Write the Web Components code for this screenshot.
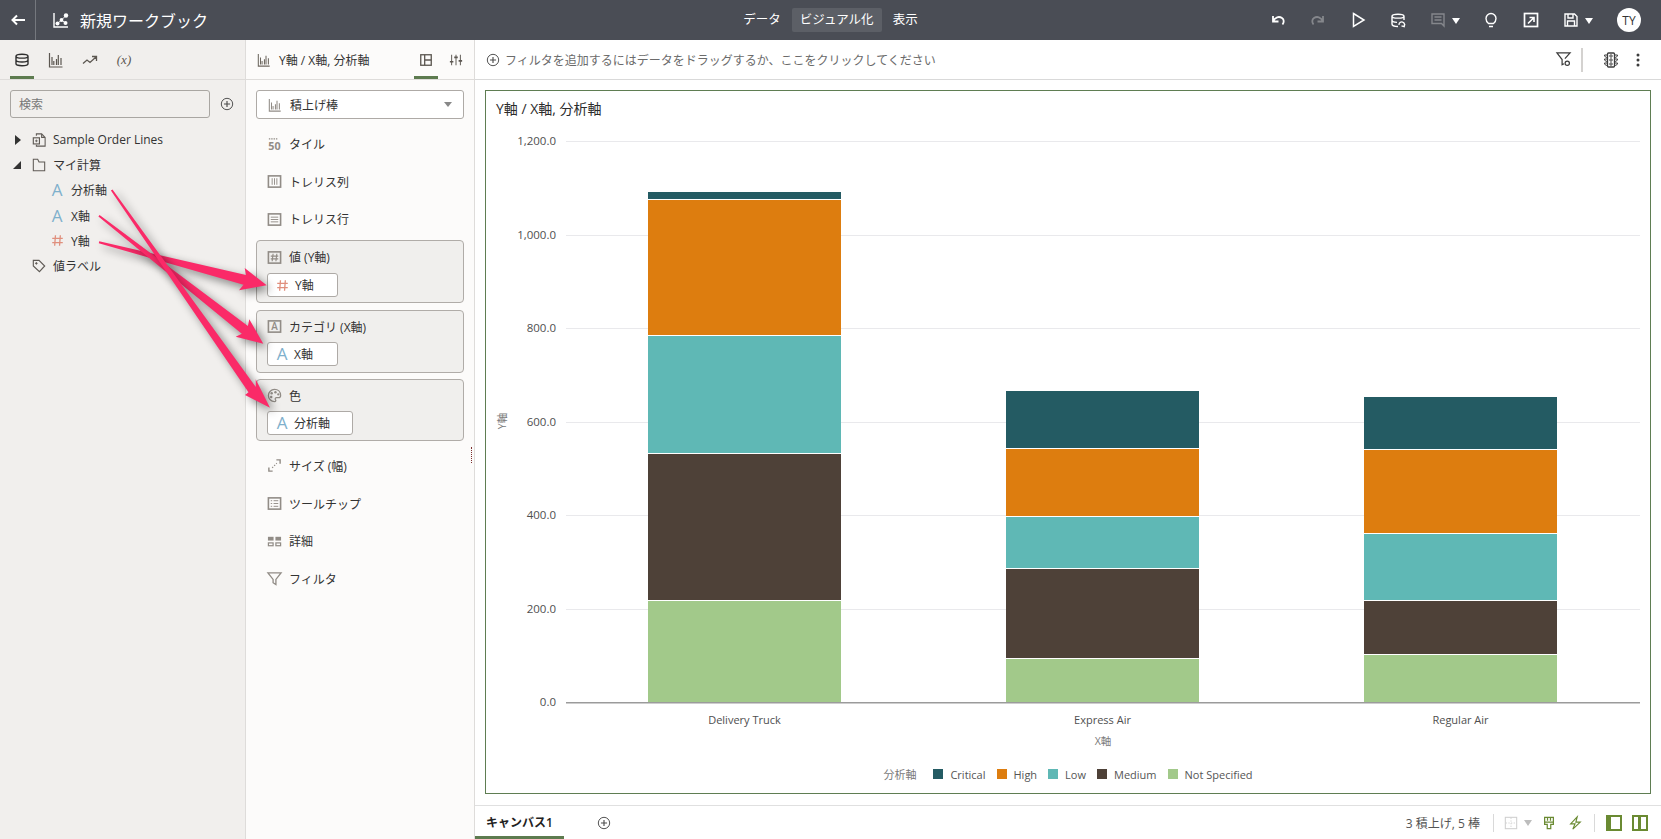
<!DOCTYPE html>
<html lang="ja">
<head>
<meta charset="utf-8">
<title>新規ワークブック</title>
<style>
    html, body { margin: 0; height: 100%; overflow: hidden; }
    body { font-family: "Open Sans", "Noto Sans CJK JP", sans-serif; font-size: 12px; color: #333; position: relative; }
</style>
</head>
<body>
<wb-app></wb-app>
<annotation-arrows></annotation-arrows>

<script>
const ICONS = {
    back: '<path d="M15 8H2.5M7 3.5 2.5 8 7 12.5" stroke-width="2"/>',
    workbook: '<path d="M1 1v14h14" stroke-width="1.4"/><path d="M4.5 11.5 8.5 8l4-4M8.5 8l4 3" stroke-width=".9"/><g fill="currentColor" stroke="none"><circle cx="4.5" cy="11.5" r="2"/><circle cx="8.5" cy="8" r="1.9"/><circle cx="13" cy="3.5" r="2.2"/><circle cx="12.5" cy="11" r="2"/></g>',
    db: '<path d="M2 4.2C2 1.6 14 1.6 14 4.2v7.6c0 2.6-12 2.6-12 0zM2 4.2c0 2.6 12 2.6 12 0M2 8c0 2.6 12 2.6 12 0" stroke-width="1.4"/>',
    bars: '<path d="M1.5 1v14h13M4 13V5M5.8 13V9M8.5 13V7M10.3 13V3M13 13V6" stroke-width="1.2"/>',
    trend: '<path d="M1 11.5 5 8l3 2.5 6-5.5M10 4.5h4.5V9" stroke-width="1.3"/>',
    plus: '<circle cx="8" cy="8" r="6.5" stroke-width="1.1"/><path d="M8 4.5v7M4.5 8h7" stroke-width="1.3"/>',
    dataset: '<path d="M5 3V1h6l4 4v10H5v-1.5M11 1v4h4" stroke-width="1.2"/><rect x="1.5" y="5.5" width="7" height="7" stroke-width="1.3"/><path d="M5 7.5v3M3.5 9h3"/>',
    folder: '<path d="M1.5 1.5h5l1.5 3h6.5v10h-13z" stroke-width="1.2"/>',
    tag: '<path d="M1.5 1.5h6.5l6.5 6.5-6 6.5-7-6.5z" stroke-width="1.3"/><circle cx="5" cy="5" r=".9" fill="currentColor"/>',
    hash: '<path d="M5.5 1.5 4.5 14.5M11.5 1.5l-1 13M1.5 5.5h13M1.5 10.5h13" stroke-width="1.6"/>',
    title50: '<path d="M2 3h9" stroke-dasharray="1.5 1" stroke-width="1.3"/><text x="8" y="14.5" text-anchor="middle" font-size="11.5" font-weight="700" fill="currentColor" stroke="none">50</text>',
    trelcol: '<rect x="1.5" y="2" width="13" height="12" stroke-width="1.7"/><path d="M5.5 4.5v7M8 4.5v7M10.5 4.5v7"/>',
    trelrow: '<rect x="1.5" y="2" width="13" height="12" stroke-width="1.7"/><path d="M4 5.5h8M4 8h8M4 10.5h8"/>',
    boxhash: '<rect x="1.5" y="2" width="13" height="12" stroke-width="1.7"/><path d="M6.5 4 5.5 12M10.5 4l-1 8M4 6.5h8M4 9.5h8" stroke-width="1.2"/>',
    boxa: '<rect x="1.5" y="2" width="13" height="12" stroke-width="1.7"/><text x="8" y="12" text-anchor="middle" font-size="10.5" font-weight="600" fill="currentColor" stroke="none">A</text>',
    palette: '<path d="M8 1.5a6.5 6.5 0 1 0 0 13c1.6 0 1.6-1.4 1-2.2-.7-1 .1-2 1.2-2h2.3c1.3 0 2-1 2-2.3C14.5 4 11.7 1.5 8 1.5z" stroke-width="1.4"/><g fill="currentColor" stroke="none"><circle cx="5" cy="5.5" r="1.3"/><circle cx="9" cy="4.5" r="1.3"/><circle cx="12" cy="6.8" r="1.2"/><circle cx="4.5" cy="9.5" r="1.3"/></g>',
    size: '<path d="M10 2h4v4M2 10v4h4" stroke-width="1.5"/><path d="M5.5 10.5l5-5" stroke-dasharray="1.5 1.5" stroke-width="1.2"/>',
    tooltip: '<rect x="1.5" y="2" width="13" height="12" stroke-width="1.7"/><path d="M4 5h1.5M7 5h5M4 8h1.5M7 8h5M4 11h1.5M7 11h5"/>',
    detail: '<g fill="currentColor" stroke="none"><rect x="1" y="3" width="6" height="4"/><rect x="9" y="3" width="6" height="4"/></g><rect x="1.5" y="9.5" width="5" height="3" stroke-width="1.3"/><rect x="9.5" y="9.5" width="5" height="3" stroke-width="1.3"/>',
    funnel: '<path d="M1 2h14L9.5 9v5.5l-3-2V9z" stroke-width="1.4"/>',
    layout: '<rect x="2" y="2" width="12" height="12" stroke-width="1.5"/><path d="M6.5 2v12M6.5 8H14" stroke-width="1.5"/>',
    sliders: '<path d="M3 2v12M8 2v12M13 2v12" stroke-width="1.1"/><path d="M1 10h4M6 5h4M11 9h4" stroke-width="1.8"/>',
    undo: '<path d="M3 4v5.5h5.5M3 9.5C5 5 9 4 12 6c2.2 1.5 2.2 4.5.5 6.5" stroke-width="1.8"/>',
    redo: '<path d="M13 4v5.5H7.5M13 9.5C11 5 7 4 4 6c-2.2 1.5-2.2 4.5-.5 6.5" stroke-width="1.8"/>',
    play: '<path d="M3.5 1.5 14 8 3.5 14.5z" stroke-width="1.5"/>',
    dbrefresh: '<path d="M8 14.5c-3 0-6-.8-6-2.5V4.2C2 1.6 14 1.6 14 4.2V8M2 4.2c0 2.6 12 2.6 12 0M2 8c0 1.5 2.5 2.3 5 2.4" stroke-width="1.4"/><path d="M9 13a2.8 2.8 0 1 1 5 1.5M14.8 11.8l-.6 2.9-2.7-.8" stroke-width="1.3"/>',
    comment: '<path d="M2 2h12v12l-2.5-2.5H2zM4.5 5h7M4.5 8h7" stroke-width="1.4"/>',
    bulb: '<path d="M5.5 11.5C4 10.3 3 8.8 3 6.5a5 5 0 0 1 10 0c0 2.3-1 3.8-2.5 5zM6 14.5h4" stroke-width="1.4"/>',
    exportbox: '<rect x="1.5" y="1.5" width="13" height="13" stroke-width="1.7"/><path d="M5 11.5l5.5-5.5M6.5 5.5h4.5V10" stroke-width="1.6"/>',
    save: '<path d="M2 2h9.5L14 4.5V14H2zM5 2v4h5V2M4.5 14V9h7v5" stroke-width="1.4"/>',
    filtergear: '<path d="M9.5 7 15 1H1l5.5 7v5.5l2-1" stroke-width="1.3"/><circle cx="12" cy="12" r="2.3" stroke-width="1.3"/>',
    traffic: '<rect x="4.5" y="1" width="7" height="14" rx="1" stroke-width="1.3"/><circle cx="8" cy="4" r="1.2"/><circle cx="8" cy="8" r="1.2"/><circle cx="8" cy="12" r="1.2"/><path d="M4.5 3H1.5c0 1.5 1 2.5 3 2.5M4.5 7H1.5c0 1.5 1 2.5 3 2.5M4.5 11H1.5c0 1.5 1 2.5 3 2.5M11.5 3h3c0 1.5-1 2.5-3 2.5M11.5 7h3c0 1.5-1 2.5-3 2.5M11.5 11h3c0 1.5-1 2.5-3 2.5"/>',
    kebab: '<g fill="currentColor" stroke="none"><circle cx="8" cy="3" r="1.5"/><circle cx="8" cy="8" r="1.5"/><circle cx="8" cy="13" r="1.5"/></g>',
    griddis: '<rect x="1.5" y="1.5" width="13" height="13" stroke-width="1.2"/><path d="M8 2v12M2 8h12" stroke-dasharray="1.5 1.5"/>',
    paint: '<path d="M3 1.5h10v8h-3V14.5H6V9.5H3zM6.3 1.5v4M9.7 1.5v4M3 7h10" stroke-width="1.4"/>',
    bolt: '<path d="M10.5 1 3 9h5l-2.5 6L14 7H9z" stroke-width="1.3"/>',
    panelleft: '<rect width="16" height="16" fill="currentColor" stroke="none"/><rect x="5" y="2" width="9" height="12" fill="#fff" stroke="none"/>',
    panelmid: '<rect width="16" height="16" fill="currentColor" stroke="none"/><rect x="2" y="2" width="12" height="12" fill="#fff" stroke="none"/><rect x="6" y="2" width="3" height="12" fill="currentColor" stroke="none"/>'
};

class WbIcon extends HTMLElement {
    connectedCallback() {
        const name = this.getAttribute('name');
        const size = this.getAttribute('size') || 16;
        if (!this.shadowRoot) this.attachShadow({mode: 'open'});
        this.shadowRoot.innerHTML = `
            <style>
                :host { display: inline-flex; flex: none; line-height: 0; }
                svg { display: block; overflow: visible; }
            </style>
            <svg width="${size}" height="${size}" viewBox="0 0 16 16" fill="none" stroke="currentColor" stroke-width="1">${ICONS[name] || ''}</svg>
        `;
    }
}
customElements.define('wb-icon', WbIcon);

class WbHeader extends HTMLElement {
    constructor() {
        super();
        this.attachShadow({mode: 'open'}).innerHTML = `
            <style>
                :host {
                    display: grid;
                    grid-template-columns: 1fr auto 1fr;
                    align-items: center;
                    height: 40px;
                    background: #4a4d55;
                    color: #fff;
                }
                .left, .right { display: flex; align-items: center; height: 40px; }
                .right { justify-content: flex-end; padding-right: 20px; }
                .back { display: flex; align-items: center; justify-content: center; width: 35px; height: 40px; border-right: 1px solid #75787e; }
                .logo { margin-left: 17px; margin-right: 11px; }
                .title { font-size: 16px; }
                nav { display: flex; align-items: center; gap: 3px; font-size: 12.5px; }
                nav span { padding: 0 8px; height: 24px; line-height: 24px; border-radius: 2px; }
                nav .on { background: #5c5f66; }
                .btn { display: flex; align-items: center; justify-content: center; width: 40px; height: 40px; }
                .group { display: flex; align-items: center; width: 53px; height: 40px; padding-left: 12px; box-sizing: border-box; gap: 6px; }
                .caret { width: 0; height: 0; border-left: 4.5px solid transparent; border-right: 4.5px solid transparent; border-top: 6px solid #fff; margin-top: 1px; }
                .off { color: #85878c; }
                .avatar {
                    width: 24px; height: 24px; border-radius: 50%;
                    background: #fff; color: #333; font-size: 12px;
                    display: flex; align-items: center; justify-content: center;
                    margin-left: 13px;
                }
            </style>
            <div class="left">
                <div class="back"><wb-icon name="back"></wb-icon></div>
                <wb-icon class="logo" name="workbook"></wb-icon>
                <span class="title">新規ワークブック</span>
            </div>
            <nav><span>データ</span><span class="on">ビジュアル化</span><span>表示</span></nav>
            <div class="right">
                <div class="btn"><wb-icon name="undo"></wb-icon></div>
                <div class="btn off"><wb-icon name="redo"></wb-icon></div>
                <div class="btn"><wb-icon name="play"></wb-icon></div>
                <div class="btn"><wb-icon name="dbrefresh"></wb-icon></div>
                <div class="group"><wb-icon class="off" name="comment"></wb-icon><i class="caret"></i></div>
                <div class="btn"><wb-icon name="bulb"></wb-icon></div>
                <div class="btn"><wb-icon name="exportbox"></wb-icon></div>
                <div class="group"><wb-icon name="save"></wb-icon><i class="caret"></i></div>
                <div class="avatar">TY</div>
            </div>
        `;
    }
}
customElements.define('wb-header', WbHeader);

class TreeRow extends HTMLElement {
    constructor() {
        super();
        const indent = this.getAttribute('indent') || 0;
        const twisty = this.getAttribute('twisty');
        const icon = this.getAttribute('icon');
        let iconHtml = `<wb-icon name="${icon}" size="14" style="color:#5f5a55"></wb-icon>`;
        if (icon === 'letter') iconHtml = '<span class="letter">A</span>';
        if (icon === 'hash') iconHtml = '<wb-icon name="hash" size="13" style="color:#e08f7d"></wb-icon>';
        this.attachShadow({mode: 'open'}).innerHTML = `
            <style>
                :host { display: flex; align-items: center; height: 25.3px; }
                .twisty { width: 32px; padding-left: 15px; box-sizing: border-box; flex: none; }
                .right { display: block; width: 0; height: 0; border-top: 5px solid transparent; border-bottom: 5px solid transparent; border-left: 6px solid #333; }
                .down { display: block; width: 0; height: 0; margin-left: -2px; border-left: 8px solid transparent; border-bottom: 8px solid #333; }
                .icon { width: 21px; display: flex; flex: none; align-items: center; }
                .child .icon { width: 20px; margin-right: 4px; justify-content: center; }
                .pad { width: ${indent}px; flex: none; }
                .letter { color: #7fb0cc; font-size: 17px; line-height: 16px; }
            </style>
            <span class="twisty"><i class="${twisty || ''}"></i></span>
            <span class="pad"></span>
            <span class="wrap ${indent > 0 ? 'child' : ''}" style="display:flex;align-items:center">
                <span class="icon">${iconHtml}</span>
                <slot></slot>
            </span>
        `;
    }
}
customElements.define('tree-row', TreeRow);

class DataPanel extends HTMLElement {
    constructor() {
        super();
        this.attachShadow({mode: 'open'}).innerHTML = `
            <style>
                :host { display: flex; flex-direction: column; width: 245px; flex: none; background: #f1efed; border-right: 1px solid #dedcda; }
                .tabs { display: flex; align-items: center; height: 39px; border-bottom: 1px solid #dedcda; padding-left: 10px; color: #5c5751; }
                .tab { position: relative; width: 24px; height: 39px; margin-right: 10px; display: flex; align-items: center; justify-content: center; }
                .tab.on { color: #2f2f2f; }
                .tab.on::after { content: ""; position: absolute; left: 0; right: 0; bottom: 0; height: 3px; background: #5d7b4f; }
                .fx { font-family: "Liberation Serif", serif; font-style: italic; font-size: 13px; }
                .search { display: flex; align-items: center; padding: 10px 11px 9px 10px; }
                .box { flex: 1; height: 26px; line-height: 28px; border: 1px solid #a9a6a2; border-radius: 3px; padding-left: 8px; color: #777; background: #f1efed; }
                .add { margin-left: 10px; color: #4d4d4d; }
            </style>
            <div class="tabs">
                <div class="tab on"><wb-icon name="db"></wb-icon></div>
                <div class="tab"><wb-icon name="bars"></wb-icon></div>
                <div class="tab"><wb-icon name="trend"></wb-icon></div>
                <div class="tab fx">(x)</div>
            </div>
            <div class="search">
                <div class="box">検索</div>
                <wb-icon class="add" name="plus" size="14"></wb-icon>
            </div>
            <tree-row twisty="right" icon="dataset">Sample Order Lines</tree-row>
            <tree-row twisty="down" icon="folder">マイ計算</tree-row>
            <tree-row indent="15" icon="letter">分析軸</tree-row>
            <tree-row indent="15" icon="letter">X軸</tree-row>
            <tree-row indent="15" icon="hash">Y軸</tree-row>
            <tree-row icon="tag">値ラベル</tree-row>
        `;
    }
}
customElements.define('data-panel', DataPanel);

class GrammarItem extends HTMLElement {
    constructor() {
        super();
        this.attachShadow({mode: 'open'}).innerHTML = `
            <style>
                :host { display: flex; align-items: center; height: 37.7px; padding-left: 21px; gap: 7px; }
                wb-icon { color: #918c86; }
            </style>
            <wb-icon name="${this.getAttribute('icon')}" size="15"></wb-icon>
            <slot></slot>
        `;
    }
}
customElements.define('grammar-item', GrammarItem);

class DataPill extends HTMLElement {
    constructor() {
        super();
        const isHash = this.getAttribute('type') === 'hash';
        this.attachShadow({mode: 'open'}).innerHTML = `
            <style>
                :host {
                    display: flex; align-items: center; width: 71px; height: 24px; box-sizing: border-box;
                    background: #fff; border: 1px solid #aeaaa6; border-radius: 3px; padding-left: 8px; gap: 6px;
                }
                .letter { color: #7fb0cc; font-size: 17px; line-height: 16px; width: 12px; text-align: center; }
            </style>
            ${isHash ? '<wb-icon name="hash" size="13" style="color:#e08f7d"></wb-icon>' : '<span class="letter">A</span>'}
            <slot></slot>
        `;
    }
}
customElements.define('data-pill', DataPill);

class DropCard extends HTMLElement {
    constructor() {
        super();
        this.attachShadow({mode: 'open'}).innerHTML = `
            <style>
                :host {
                    display: block; height: 63px; box-sizing: border-box; margin: 0 10px 7px;
                    background: #f0efed; border: 1px solid #b0aca8; border-radius: 4px; padding: 0 10px;
                }
                .head { display: flex; align-items: center; height: var(--head, 31px); gap: 7px; }
                wb-icon { color: #918c86; }
            </style>
            <div class="head">
                <wb-icon name="${this.getAttribute('icon')}" size="15"></wb-icon>
                <span>${this.getAttribute('label')}</span>
            </div>
            <slot></slot>
        `;
    }
}
customElements.define('drop-card', DropCard);

class GrammarPanel extends HTMLElement {
    constructor() {
        super();
        this.attachShadow({mode: 'open'}).innerHTML = `
            <style>
                :host { display: flex; flex-direction: column; position: relative; width: 228px; flex: none; background: #fcfbfa; border-right: 1px solid #dedcda; }
                .tabs { display: flex; align-items: center; height: 39px; border-bottom: 1px solid #dedcda; padding-left: 11px; }
                .tabs .name { margin-left: 8px; flex: 1; }
                .tab { position: relative; width: 24px; height: 39px; margin-right: 6px; display: flex; align-items: center; justify-content: center; color: #5c5751; }
                .tab.on::after { content: ""; position: absolute; left: 0; right: 0; bottom: 0; height: 3px; background: #5d7b4f; }
                .select {
                    display: flex; align-items: center; height: 29px; box-sizing: border-box; margin: 10px 10px 6px;
                    background: #fff; border: 1px solid #aeaaa6; border-radius: 3px; padding: 0 11px; gap: 8px;
                }
                .select wb-icon { color: #918c86; }
                .select span { flex: 1; }
                .select i { width: 0; height: 0; border-left: 4px solid transparent; border-right: 4px solid transparent; border-top: 5px solid #888; }
                .grip { position: absolute; right: 2px; top: 407px; height: 16px; border-left: 1.5px dotted #7d2f2f; }
            </style>
            <div class="tabs">
                <wb-icon name="bars" size="14" style="color:#6d675f"></wb-icon>
                <span class="name">Y軸 / X軸, 分析軸</span>
                <div class="tab on"><wb-icon name="layout" size="14"></wb-icon></div>
                <div class="tab"><wb-icon name="sliders" size="14"></wb-icon></div>
            </div>
            <div class="select">
                <wb-icon name="bars" size="14"></wb-icon>
                <span>積上げ棒</span>
                <i></i>
            </div>
            <grammar-item icon="title50">タイル</grammar-item>
            <grammar-item icon="trelcol">トレリス列</grammar-item>
            <grammar-item icon="trelrow">トレリス行</grammar-item>
            <drop-card style="margin-top:2px;--head:32px" icon="boxhash" label="値 (Y軸)"><data-pill type="hash">Y軸</data-pill></drop-card>
            <drop-card style="margin-bottom:6px" icon="boxa" label="カテゴリ (X軸)"><data-pill>X軸</data-pill></drop-card>
            <drop-card style="height:62px;margin-bottom:6px" icon="palette" label="色"><data-pill style="width:86px">分析軸</data-pill></drop-card>
            <grammar-item icon="size">サイズ (幅)</grammar-item>
            <grammar-item icon="tooltip">ツールチップ</grammar-item>
            <grammar-item icon="detail">詳細</grammar-item>
            <grammar-item icon="funnel">フィルタ</grammar-item>
            <div class="grip"></div>
        `;
    }
}
customElements.define('grammar-panel', GrammarPanel);

class FilterBar extends HTMLElement {
    constructor() {
        super();
        this.attachShadow({mode: 'open'}).innerHTML = `
            <style>
                :host { display: flex; align-items: center; height: 39px; flex: none; border-bottom: 1px solid #d9d9d9; padding-left: 11px; color: #6b6b6b; }
                .text { flex: 1; margin-left: 5px; }
                .add { color: #4d4d4d; }
                .tool { color: #3c3c3c; }
                .sep { width: 2px; height: 24px; background: #d4d2d0; margin: 0 20px 0 10px; }
                .more { margin: 0 15px 0 11px; }
            </style>
            <wb-icon class="add" name="plus" size="14"></wb-icon>
            <span class="text">フィルタを追加するにはデータをドラッグするか、ここをクリックしてください</span>
            <wb-icon class="tool" name="filtergear" size="15"></wb-icon>
            <div class="sep"></div>
            <wb-icon class="tool" name="traffic"></wb-icon>
            <wb-icon class="tool more" name="kebab"></wb-icon>
        `;
    }
}
customElements.define('filter-bar', FilterBar);

const SERIES = [
    {name: 'Critical', color: '#245b63'},
    {name: 'High', color: '#dd7d0f'},
    {name: 'Low', color: '#5fb8b5'},
    {name: 'Medium', color: '#4e4138'},
    {name: 'Not Specified', color: '#a2c98a'}
];

// segment tops and bottoms per category, in page pixels
const BARS = [
    {label: 'Delivery Truck', x: 648, segs: [[192, 199], [200, 335], [336, 453], [454, 600], [601, 702]]},
    {label: 'Express Air', x: 1006, segs: [[391, 448], [449, 516], [517, 568], [569, 658], [659, 702]]},
    {label: 'Regular Air', x: 1364, segs: [[397, 449], [450, 533], [534, 600], [601, 654], [655, 702]]}
];

class StackedChart extends HTMLElement {
    constructor() {
        super();
        const ox = 486;
        const oy = 130;
        let svg = '';
        [0, 200, 400, 600, 800, 1000, 1200].forEach(v => {
            const y = Math.round(702.3 - v * 0.4675);
            if (v > 0) svg += `<rect x="${566 - ox}" y="${y - oy}" width="1074" height="1" fill="#e9e9ec"/>`;
            const label = v.toLocaleString('en-US', {minimumFractionDigits: 1});
            svg += `<text x="${556 - ox}" y="${y - oy + 4}" text-anchor="end" fill="#4f4f4f" font-size="11.5">${label}</text>`;
        });
        BARS.forEach(bar => {
            bar.segs.forEach((seg, i) => {
                svg += `<rect x="${bar.x - ox}" y="${seg[0] - oy}" width="193" height="${seg[1] - seg[0]}" fill="${SERIES[i].color}"/>`;
            });
            svg += `<text x="${bar.x + 96.5 - ox}" y="${724 - oy}" text-anchor="middle" fill="#4f4f4f" font-size="11">${bar.label}</text>`;
        });
        svg += `<rect x="${566 - ox}" y="${702 - oy}" width="1074" height="1.5" fill="#9b9b9b"/>`;
        svg += `<text x="${1103 - ox}" y="${745 - oy}" text-anchor="middle" fill="#7a7a7a" font-size="10.5">X軸</text>`;
        svg += `<text transform="translate(${506 - ox} ${421 - oy}) rotate(-90)" text-anchor="middle" fill="#7a7a7a" font-size="10.5">Y軸</text>`;

        const legend = SERIES.map(s => `<span class="key"><i style="background:${s.color}"></i>${s.name}</span>`).join('');
        this.attachShadow({mode: 'open'}).innerHTML = `
            <style>
                :host { display: flex; flex-direction: column; flex: 1; }
                svg { display: block; font-family: inherit; }
                .legend { display: flex; justify-content: center; align-items: center; height: 28px; padding-bottom: 5px; font-size: 11px; color: #555; gap: 11px; }
                .legend .name { color: #7a7a7a; margin-right: 6px; }
                .key { display: flex; align-items: center; gap: 7px; }
                .key i { width: 10px; height: 10px; display: block; }
            </style>
            <svg width="1164" height="630">${svg}</svg>
            <div class="legend"><span class="name">分析軸</span>${legend}</div>
        `;
    }
}
customElements.define('stacked-chart', StackedChart);

class VizFrame extends HTMLElement {
    constructor() {
        super();
        this.attachShadow({mode: 'open'}).innerHTML = `
            <style>
                :host { display: flex; flex-direction: column; flex: 1; border: 1px solid #5f7d52; background: #fff; }
                .title { height: 38px; padding: 1px 0 0 10px; font-size: 14px; line-height: 33px; color: #2b2b2b; }
            </style>
            <div class="title">${this.getAttribute('heading')}</div>
            <slot></slot>
        `;
    }
}
customElements.define('viz-frame', VizFrame);

class CanvasTabs extends HTMLElement {
    constructor() {
        super();
        this.attachShadow({mode: 'open'}).innerHTML = `
            <style>
                :host { display: flex; align-items: center; height: 33px; flex: none; border-top: 1px solid #e0e0e0; background: #fff; }
                .tab { position: relative; width: 89px; height: 33px; line-height: 33px; padding-left: 11px; box-sizing: border-box; font-weight: 600; color: #222; }
                .tab::after { content: ""; position: absolute; left: 0; right: 0; bottom: 0; height: 3px; background: #5d7b4f; }
                .add { margin-left: 33px; color: #4d4d4d; }
                .status { margin-left: auto; display: flex; align-items: center; padding-right: 13px; color: #555; }
                .sep { width: 1px; height: 18px; background: #d9d9d9; }
                .caret { width: 0; height: 0; border-left: 4.5px solid transparent; border-right: 4.5px solid transparent; border-top: 6px solid #bdbdbd; margin: 0 0 0 6px; }
                .green { color: #6a8a32; }
            </style>
            <div class="tab">キャンバス1</div>
            <wb-icon class="add" name="plus" size="14"></wb-icon>
            <div class="status">
                <span>3 積上げ, 5 棒</span>
                <span class="sep" style="margin:0 10px 0 13px"></span>
                <wb-icon name="griddis" size="14" style="color:#cfcfcf"></wb-icon>
                <i class="caret"></i>
                <wb-icon class="green" name="paint" size="14" style="margin-left:10px"></wb-icon>
                <wb-icon class="green" name="bolt" size="14" style="margin-left:12px"></wb-icon>
                <span class="sep" style="margin:0 11px 0 12px"></span>
                <wb-icon class="green" name="panelleft"></wb-icon>
                <wb-icon class="green" name="panelmid" style="margin-left:10px"></wb-icon>
            </div>
        `;
    }
}
customElements.define('canvas-tabs', CanvasTabs);

class WbApp extends HTMLElement {
    constructor() {
        super();
        this.attachShadow({mode: 'open'}).innerHTML = `
            <style>
                :host { display: flex; flex-direction: column; height: 839px; }
                .body { display: flex; flex: 1; min-height: 0; }
                .main { display: flex; flex-direction: column; flex: 1; min-width: 0; background: #fff; }
                .canvas { display: flex; flex: 1; min-height: 0; padding: 10px 10px 11px; }
            </style>
            <wb-header></wb-header>
            <div class="body">
                <data-panel></data-panel>
                <grammar-panel></grammar-panel>
                <div class="main">
                    <filter-bar></filter-bar>
                    <div class="canvas">
                        <viz-frame heading="Y軸 / X軸, 分析軸"><stacked-chart></stacked-chart></viz-frame>
                    </div>
                    <canvas-tabs></canvas-tabs>
                </div>
            </div>
        `;
    }
}
customElements.define('wb-app', WbApp);

// the pink callouts drawn over the screenshot, coordinates are the content here
const ARROWS = [
    {from: [99, 242.3], tip: [266.7, 285.3], a: [244.7, 268], b: [239, 290.3], w: 10},
    {from: [99, 215.7], tip: [263.3, 343.7], a: [249.3, 319.3], b: [235.7, 336.7], w: 10},
    {from: [111.7, 190], tip: [270, 407.7], a: [255.7, 379.3], b: [245, 395], w: 9}
];

function arrowPoints(arrow) {
    const dx = arrow.tip[0] - arrow.from[0];
    const dy = arrow.tip[1] - arrow.from[1];
    const len = Math.hypot(dx, dy);
    const ux = dx / len, uy = dy / len;
    const nx = uy, ny = -ux;
    // shaft meets the head a little in front of the line through the barbs
    const mid = [(arrow.a[0] + arrow.b[0]) / 2 + ux * 3, (arrow.a[1] + arrow.b[1]) / 2 + uy * 3];
    const h = arrow.w / 2;
    const pts = [
        [arrow.from[0] + nx * 1, arrow.from[1] + ny * 1],
        [mid[0] + nx * h, mid[1] + ny * h],
        arrow.a,
        arrow.tip,
        arrow.b,
        [mid[0] - nx * h, mid[1] - ny * h],
        [arrow.from[0] - nx * 1, arrow.from[1] - ny * 1]
    ];
    return pts.map(p => p[0].toFixed(1) + ',' + p[1].toFixed(1)).join(' ');
}

class AnnotationArrows extends HTMLElement {
    constructor() {
        super();
        const polys = ARROWS.map(a => `<polygon points="${arrowPoints(a)}"/>`).join('');
        this.attachShadow({mode: 'open'}).innerHTML = `
            <style>
                :host { position: absolute; left: 0; top: 0; width: 500px; height: 500px; pointer-events: none; }
                svg { display: block; }
                polygon { fill: #fa2a68; filter: drop-shadow(4px 4px 4px rgba(0, 0, 0, .45)); }
            </style>
            <svg width="500" height="500">${polys}</svg>
        `;
    }
}
customElements.define('annotation-arrows', AnnotationArrows);
</script>
</body>
</html>
